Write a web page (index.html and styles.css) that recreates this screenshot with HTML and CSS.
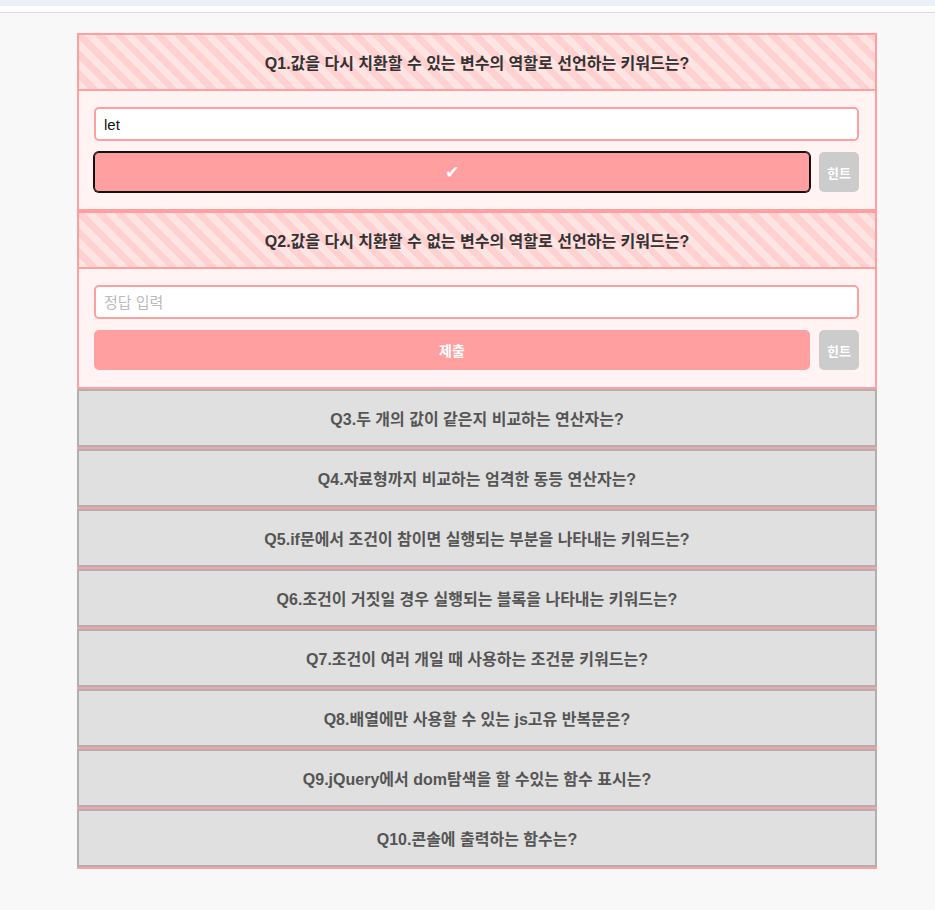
FILE: index.html
```html
<!DOCTYPE html>
<html lang="ko">
<head>
<meta charset="utf-8">
<title>JS 퀴즈</title>
<link rel="stylesheet" href="styles.css">
</head>
<body>
<div class="topbar"></div>
<div class="subbar"></div>
<main class="quiz">
  <section class="q is-open">
    <h3 class="q-title">Q1.값을 다시 치환할 수 있는 변수의 역할로 선언하는 키워드는?</h3>
    <div class="q-body">
      <input class="answer" type="text" value="let">
      <div class="actions">
        <button class="submit is-focused">✔</button>
        <button class="hint">힌트</button>
      </div>
    </div>
  </section>
  <section class="q is-open">
    <h3 class="q-title">Q2.값을 다시 치환할 수 없는 변수의 역할로 선언하는 키워드는?</h3>
    <div class="q-body">
      <input class="answer" type="text" placeholder="정답 입력">
      <div class="actions">
        <button class="submit">제출</button>
        <button class="hint">힌트</button>
      </div>
    </div>
  </section>
  <section class="q"><h3 class="q-title">Q3.두 개의 값이 같은지 비교하는 연산자는?</h3><div class="q-body"></div></section>
  <section class="q"><h3 class="q-title">Q4.자료형까지 비교하는 엄격한 동등 연산자는?</h3><div class="q-body"></div></section>
  <section class="q"><h3 class="q-title">Q5.if문에서 조건이 참이면 실행되는 부분을 나타내는 키워드는?</h3><div class="q-body"></div></section>
  <section class="q"><h3 class="q-title">Q6.조건이 거짓일 경우 실행되는 블록을 나타내는 키워드는?</h3><div class="q-body"></div></section>
  <section class="q"><h3 class="q-title">Q7.조건이 여러 개일 때 사용하는 조건문 키워드는?</h3><div class="q-body"></div></section>
  <section class="q"><h3 class="q-title">Q8.배열에만 사용할 수 있는 js고유 반복문은?</h3><div class="q-body"></div></section>
  <section class="q"><h3 class="q-title">Q9.jQuery에서 dom탐색을 할 수있는 함수 표시는?</h3><div class="q-body"></div></section>
  <section class="q"><h3 class="q-title">Q10.콘솔에 출력하는 함수는?</h3><div class="q-body"></div></section>
</main>
</body>
</html>
```

FILE: styles.css
```css
* { box-sizing: border-box; }

html, body {
  margin: 0;
  padding: 0;
  background: #f8f8f8;
  font-family: "Liberation Sans", "Noto Sans CJK KR", sans-serif;
}

.topbar {
  height: 6px;
  background: #ebf0f9;
}

.subbar {
  height: 7px;
  background: #ffffff;
  border-bottom: 1px solid #dcdcdc;
}

.quiz {
  width: 800px;
  margin: 20px 0 40px 77px;
}

.q-title {
  margin: 0;
  height: 58px;
  display: flex;
  align-items: center;
  justify-content: center;
  font-size: 16px;
  font-weight: bold;
  color: #555555;
  background: #e0e0e0;
  border: 2px solid #b0b0b0;
}

.q-body {
  height: 0;
  overflow: hidden;
  border-bottom: 2px solid #ff9f9f;
}

.q.is-open .q-title {
  color: #333333;
  border-color: #ff9f9f;
  background: repeating-linear-gradient(45deg, #ffe4e4 0 7px, #ffd1d1 7px 14px);
}

.q.is-open .q-body {
  height: auto;
  padding: 16px 16px 17px 15px;
  background: #fff3f3;
  border: 2px solid #ff9f9f;
  border-top: none;
}

.answer {
  display: block;
  width: 100%;
  height: 34px;
  margin: 0 0 11px;
  padding: 0 8px;
  font-family: "Liberation Sans", "Noto Sans CJK KR", sans-serif;
  font-size: 15px;
  color: #111111;
  background: #ffffff;
  border: 2px solid #ff9f9f;
  border-radius: 5px;
  outline: none;
}

.answer::placeholder {
  color: #bbbbbb;
}

.actions {
  display: flex;
  gap: 9px;
}

.submit,
.hint {
  height: 40px;
  border: none;
  border-radius: 5px;
  font-family: "Liberation Sans", "Noto Sans CJK KR", sans-serif;
  font-weight: bold;
  color: #ffffff;
  cursor: pointer;
}

.submit {
  flex: 1;
  font-size: 14px;
  background: #ff9f9f;
}

.submit.is-focused {
  font-family: "DejaVu Sans", sans-serif;
  font-size: 17px;
  box-shadow: 0 0 0 1px #111111, inset 0 0 0 1px #111111;
}

.hint {
  width: 40px;
  padding: 0;
  font-size: 13px;
  background: #cccccc;
}
```
